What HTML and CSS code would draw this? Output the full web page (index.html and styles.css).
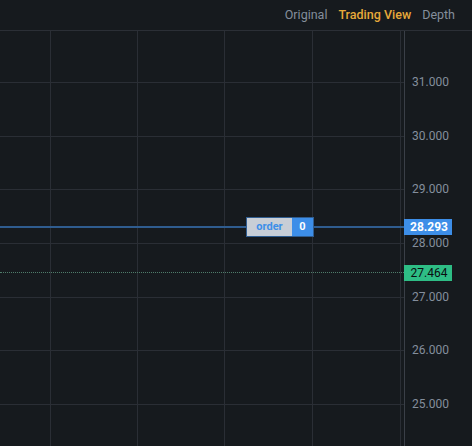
FILE: index.html
```html
<!DOCTYPE html>
<html>
<head>
<meta charset="utf-8">
<link rel="stylesheet" href="styles.css">
</head>
<body>
<div class="app">
  <div class="header">
    <span class="tab">Original</span>
    <span class="tab active">Trading View</span>
    <span class="tab">Depth</span>
  </div>
  <div class="chart">
    <div class="vline" style="left:50px"></div>
    <div class="vline" style="left:137px"></div>
    <div class="vline" style="left:224px"></div>
    <div class="vline" style="left:312px"></div>
    <div class="vline" style="left:400px"></div>
    <div class="axis-line"></div>

    <div class="hline" style="top:51px"></div>
    <div class="hline" style="top:105px"></div>
    <div class="hline" style="top:158px"></div>
    <div class="hline" style="top:212px"></div>
    <div class="hline" style="top:266px"></div>
    <div class="hline" style="top:319px"></div>
    <div class="hline" style="top:373px"></div>

    <div class="label" style="top:51px">31.000</div>
    <div class="label" style="top:105px">30.000</div>
    <div class="label" style="top:158px">29.000</div>
    <div class="label" style="top:212px">28.000</div>
    <div class="label" style="top:266px">27.000</div>
    <div class="label" style="top:319px">26.000</div>
    <div class="label" style="top:373px">25.000</div>

    <div class="last-line"></div>
    <div class="tag tag-green">27.464</div>

    <div class="order-line"></div>
    <div class="order-box">
      <span class="order-text">order</span>
      <span class="order-qty">0</span>
    </div>
    <div class="tag tag-blue">28.293</div>
  </div>
</div>
</body>
</html>
```
FILE: styles.css
```css
html, body {
  margin: 0;
  padding: 0;
  background: #161a1e;
}
.app {
  width: 472px;
  height: 446px;
  overflow: hidden;
  background: #161a1e;
  font-family: Roboto, "Liberation Sans", sans-serif;
}
.header {
  height: 30px;
  border-bottom: 1px solid #2b2f36;
  display: flex;
  justify-content: flex-end;
  align-items: center;
  gap: 11px;
  padding-right: 17px;
  box-sizing: content-box;
}
.tab {
  font-size: 12.5px;
  color: #848e9c;
  line-height: 30px;
}
.tab.active {
  color: #e6a93a;
  font-weight: 500;
}
.chart {
  position: relative;
  height: 415px;
}
.vline {
  position: absolute;
  top: 0;
  bottom: 0;
  width: 1px;
  background: #2a2e35;
}
.axis-line {
  position: absolute;
  top: 0;
  bottom: 0;
  left: 404px;
  width: 1px;
  background: #3a3f47;
}
.hline {
  position: absolute;
  left: 0;
  width: 404px;
  height: 1px;
  background: #2a2e35;
}
.label {
  position: absolute;
  left: 412px;
  font-size: 12px;
  line-height: 14px;
  margin-top: -7px;
  color: #848e9c;
}
.last-line {
  position: absolute;
  left: 0;
  width: 404px;
  top: 241px;
  height: 0;
  border-top: 1px dotted #4f7c6a;
}
.order-line {
  position: absolute;
  left: 0;
  width: 404px;
  top: 195px;
  height: 2px;
  background: #2f5c8f;
}
.order-box {
  position: absolute;
  left: 246px;
  top: 186px;
  height: 18px;
  width: 66px;
  display: flex;
  border: 1px solid #2f5c8f;
}
.order-text {
  flex: 1;
  background: #c8ced6;
  color: #3d8ee8;
  font-size: 11px;
  font-weight: 700;
  line-height: 18px;
  text-align: center;
}
.order-qty {
  width: 21px;
  background: #3d8ee8;
  color: #ffffff;
  font-size: 11px;
  font-weight: 700;
  line-height: 18px;
  text-align: center;
}
.tag {
  position: absolute;
  left: 404px;
  width: 48px;
  height: 16px;
  font-size: 12px;
  line-height: 16px;
  text-align: center;
  box-sizing: border-box;
  padding-left: 2px;
}
.tag-blue {
  top: 188px;
  background: #3d8ee8;
  color: #ffffff;
  font-weight: 700;
}
.tag-green {
  top: 234px;
  background: #2ebd85;
  color: #0b0e11;
}
```
